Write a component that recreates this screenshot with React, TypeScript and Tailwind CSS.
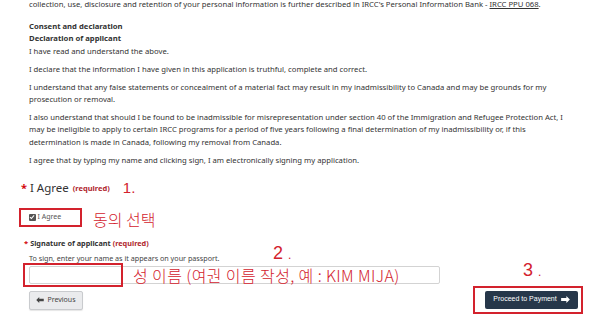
import React from 'react'

const red = 'text-[#d3222d]'

function ArrowLeft() {
  return (
    <svg viewBox="0 0 10 8" className="h-[6px] w-[8px]" aria-hidden>
      <path d="M0 4 L4 0 L4 2.3 L10 2.3 L10 5.7 L4 5.7 L4 8 Z" fill="currentColor" />
    </svg>
  )
}

function ArrowRight() {
  return (
    <svg viewBox="0 0 10 8" className="h-[7px] w-[9px]" aria-hidden>
      <path d="M10 4 L6 0 L6 2.3 L0 2.3 L0 5.7 L6 5.7 L6 8 Z" fill="currentColor" />
    </svg>
  )
}

export default function App() {
  return (
    <div className="h-[331px] w-[600px] overflow-hidden bg-white font-['Noto_Sans',sans-serif] text-[7.7px] leading-[12.5px] text-[#333]">
      <div className="pl-[29px] pr-[22px]">
        {/* declaration text */}
        <div className="-mt-[2px]">
          <p>
            collection, use, disclosure and retention of your personal information is further described in IRCC's
            Personal Information Bank - <span className="underline">IRCC PPU 068</span>.
          </p>
          <p className="mt-[9px] font-bold">Consent and declaration</p>
          <p className="font-bold">Declaration of applicant</p>
          <p>I have read and understand the above.</p>
          <p className="mt-[5.5px]">
            I declare that the information I have given in this application is truthful, complete and correct.
          </p>
          <p className="mt-[5.5px]">
            I understand that any false statements or concealment of a material fact may result in my
            inadmissibility to Canada and may be grounds for my
            <br />
            prosecution or removal.
          </p>
          <p className="mt-[5px]">
            I also understand that should I be found to be inadmissible for misrepresentation under section 40 of
            the Immigration and Refugee Protection Act, I
            <br />
            may be ineligible to apply to certain IRCC programs for a period of five years following a final
            determination of my inadmissibility or, if this
            <br />
            determination is made in Canada, following my removal from Canada.
          </p>
          <p className="mt-[6px]">
            I agree that by typing my name and clicking sign, I am electronically signing my application.
          </p>
        </div>

        {/* I Agree */}
        <div className="mt-[13px] -ml-[8px] flex h-[17px] items-center">
          <span className="mr-[3px] text-[11px] font-bold text-[#d3080c]">*</span>
          <span className="text-[11.5px]">I Agree</span>
          <span className="ml-[4px] text-[7.5px] font-bold text-[#b0262d]">(required)</span>
          <span className={`ml-[13px] font-['Liberation_Sans',sans-serif] text-[15px] ${red}`}>1.</span>
        </div>

        <div className="mt-[10px] -ml-[10px] flex items-center">
          <div className="flex h-[19px] w-[63px] items-center border-[2.5px] border-[#d3222d] pl-[7.5px]">
            <span className="flex h-[7px] w-[7px] items-center justify-center rounded-[1px] bg-[#555]">
              <svg viewBox="0 0 8 8" className="h-[6px] w-[6px]" aria-hidden>
                <path d="M1.3 4.2 L3.2 6 L6.8 1.8" stroke="white" strokeWidth="1.4" fill="none" />
              </svg>
            </span>
            <span className="ml-[2px] text-[7px] text-[#555]">I Agree</span>
          </div>
          <span
            className={`ml-[11px] mt-[3px] font-['Noto_Sans_CJK_KR',sans-serif] text-[16px] font-light leading-[18px] ${red}`}
          >
            동의 선택
          </span>
        </div>

        {/* signature */}
        <div className="mt-[9px] -ml-[5px] flex items-center leading-[12px]">
          <span className="mr-[2px] font-bold text-[#d3080c]">*</span>
          <span className="text-[7.3px] font-bold">Signature of applicant</span>
          <span className="ml-[2px] text-[7.3px] font-bold text-[#b0262d]">(required)</span>
        </div>
        <p className="mt-[3px] text-[7.2px] leading-[12px] text-[#444]">
          To sign, enter your name as it appears on your passport.
        </p>

        <div className="relative mt-[2px] h-[18px] w-[411px]">
          <div className="h-full w-full rounded-[2px] border border-[#d3d3d3] bg-white" />
          <div className="absolute -left-[6px] -top-[3px] h-[24px] w-[100px] border-[2.5px] border-[#d3222d]" />
          <span
            className={`absolute left-[104px] top-0 font-['Noto_Sans_CJK_KR',sans-serif] text-[16px] font-light tracking-[0.4px] leading-[18px] ${red}`}
          >
            성 이름 (여권 이름 작성, 예 : KIM MIJA)
          </span>
          <span
            className={`absolute left-[244px] -top-[23px] font-['Liberation_Sans',sans-serif] text-[18px] leading-[20px] ${red}`}
          >
            2 <span className="text-[12px]">.</span>
          </span>
        </div>

        {/* buttons */}
        <div className="mt-[7px] flex items-start justify-between">
          <button className="flex h-[19px] w-[54px] items-center justify-center gap-[3px] rounded-[2px] border border-[#c9cbce] bg-[#eaebed] text-[7px] text-[#444] shadow-[0_1px_1px_rgba(0,0,0,0.1)]">
            <ArrowLeft />
            Previous
          </button>
          <div className="relative">
            <div className="absolute -left-[12px] -right-[5px] -top-[5px] -bottom-[5px] border-[2.5px] border-[#d3222d]" />
            <span
              className={`absolute left-[38px] -top-[31px] font-['Liberation_Sans',sans-serif] text-[18px] leading-[20px] ${red}`}
            >
              3 <span className="text-[12px]">.</span>
            </span>
            <button className="relative flex h-[18px] w-[93px] items-center justify-center gap-[4px] rounded-[2px] bg-[#26374a] font-['Liberation_Sans',sans-serif] text-[7px] text-white">
              Proceed to Payment
              <ArrowRight />
            </button>
          </div>
        </div>
      </div>
    </div>
  )
}
